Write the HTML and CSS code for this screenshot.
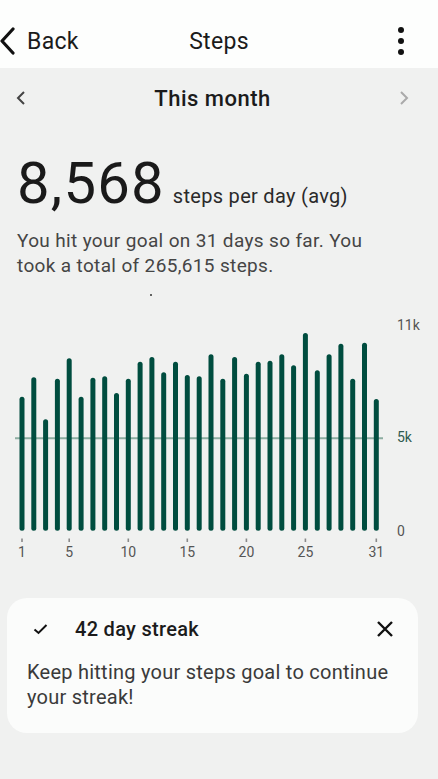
FILE: index.html
```html
<!DOCTYPE html>
<html lang="en">
<head>
    <meta charset="UTF-8">
    <meta name="viewport" content="width=device-width, initial-scale=1.0">
    <title>Steps</title>
    <link rel="stylesheet" href="styles.css">
</head>
<body>
    <div class="topbar">
        <div class="back">
            <svg class="back-icon" width="16" height="28" viewBox="0 0 16 28"><path d="M13 2 L2 14 L13 26" fill="none" stroke="#111" stroke-width="3.2" stroke-linecap="round" stroke-linejoin="round"/></svg>
            <span>Back</span>
        </div>
        <div class="title">Steps</div>
        <div class="kebab">
            <span></span><span></span><span></span>
        </div>
    </div>

    <div class="period">
        <svg width="12" height="16" viewBox="0 0 12 16"><path d="M9 2 L3 8 L9 14" fill="none" stroke="#444" stroke-width="2"/></svg>
        <div class="period-name">This month</div>
        <svg width="12" height="16" viewBox="0 0 12 16"><path d="M3 2 L9 8 L3 14" fill="none" stroke="#aaa" stroke-width="2"/></svg>
    </div>

    <div class="summary">
        <div class="avg"><span class="avg-num">8,568</span><span class="avg-unit">steps per day (avg)</span></div>
        <p class="note">You hit your goal on 31 days so far. You took a total of 265,615 steps.</p>
    </div>

    <svg class="chart" width="438" height="280" viewBox="0 0 438 280">
        <circle cx="151" cy="10" r="1" fill="#333"/>
        <g transform="translate(0,25)">
            <line x1="15" y1="128.3" x2="383" y2="128.3" stroke="#8dada1" stroke-width="2"/>
            <g stroke="#004d3f" stroke-width="5" stroke-linecap="round">
                <line x1="22.0" y1="89.2" x2="22.0" y2="218.2"/>
                <line x1="33.8" y1="69.8" x2="33.8" y2="218.2"/>
                <line x1="45.6" y1="111.8" x2="45.6" y2="218.2"/>
                <line x1="57.4" y1="71.2" x2="57.4" y2="218.2"/>
                <line x1="69.2" y1="50.8" x2="69.2" y2="218.2"/>
                <line x1="81.1" y1="89.2" x2="81.1" y2="218.2"/>
                <line x1="92.9" y1="70.2" x2="92.9" y2="218.2"/>
                <line x1="104.7" y1="68.8" x2="104.7" y2="218.2"/>
                <line x1="116.5" y1="85.5" x2="116.5" y2="218.2"/>
                <line x1="128.3" y1="71.2" x2="128.3" y2="218.2"/>
                <line x1="140.1" y1="54.2" x2="140.1" y2="218.2"/>
                <line x1="151.9" y1="49.5" x2="151.9" y2="218.2"/>
                <line x1="163.7" y1="64.8" x2="163.7" y2="218.2"/>
                <line x1="175.5" y1="54.2" x2="175.5" y2="218.2"/>
                <line x1="187.3" y1="67.5" x2="187.3" y2="218.2"/>
                <line x1="199.2" y1="68.8" x2="199.2" y2="218.2"/>
                <line x1="211.0" y1="46.8" x2="211.0" y2="218.2"/>
                <line x1="222.8" y1="71.2" x2="222.8" y2="218.2"/>
                <line x1="234.6" y1="49.5" x2="234.6" y2="218.2"/>
                <line x1="246.4" y1="66.2" x2="246.4" y2="218.2"/>
                <line x1="258.2" y1="54.2" x2="258.2" y2="218.2"/>
                <line x1="270.0" y1="53.2" x2="270.0" y2="218.2"/>
                <line x1="281.8" y1="46.8" x2="281.8" y2="218.2"/>
                <line x1="293.6" y1="57.8" x2="293.6" y2="218.2"/>
                <line x1="305.4" y1="25.5" x2="305.4" y2="218.2"/>
                <line x1="317.3" y1="62.8" x2="317.3" y2="218.2"/>
                <line x1="329.1" y1="46.8" x2="329.1" y2="218.2"/>
                <line x1="340.9" y1="36.2" x2="340.9" y2="218.2"/>
                <line x1="352.7" y1="71.2" x2="352.7" y2="218.2"/>
                <line x1="364.5" y1="35.2" x2="364.5" y2="218.2"/>
                <line x1="376.3" y1="91.5" x2="376.3" y2="218.2"/>
            </g>
            <g stroke="#8a8a8a" stroke-width="1.6">
                <line x1="22.0" y1="228.5" x2="22.0" y2="232"/>
                <line x1="69.2" y1="228.5" x2="69.2" y2="232"/>
                <line x1="128.3" y1="228.5" x2="128.3" y2="232"/>
                <line x1="187.3" y1="228.5" x2="187.3" y2="232"/>
                <line x1="246.4" y1="228.5" x2="246.4" y2="232"/>
                <line x1="305.4" y1="228.5" x2="305.4" y2="232"/>
                <line x1="376.3" y1="228.5" x2="376.3" y2="232"/>
            </g>
            <g class="day-labels" text-anchor="middle">
                <text x="22.0" y="246.5">1</text>
                <text x="69.2" y="246.5">5</text>
                <text x="128.3" y="246.5">10</text>
                <text x="187.3" y="246.5">15</text>
                <text x="246.4" y="246.5">20</text>
                <text x="305.4" y="246.5">25</text>
                <text x="376.3" y="246.5">31</text>
            </g>
            <text class="axis" x="397" y="20">11k</text>
            <text class="axis goal" x="397" y="132">5k</text>
            <text class="axis" x="397" y="226">0</text>
        </g>
    </svg>

    <div class="card">
        <div class="card-head">
            <svg class="check" width="15" height="12" viewBox="0 0 15 12"><path d="M1.5 6.5 L5.5 10 L13.5 2" fill="none" stroke="#111" stroke-width="2"/></svg>
            <div class="card-title">42 day streak</div>
            <svg class="close" width="18" height="18" viewBox="0 0 18 18"><path d="M2 2 L16 16 M16 2 L2 16" fill="none" stroke="#111" stroke-width="2.4"/></svg>
        </div>
        <p class="card-text">Keep hitting your steps goal to continue your streak!</p>
    </div>
</body>
</html>
```

FILE: styles.css
```css
body { margin: 0; background: #f0f1f0; font-family: Roboto, "Noto Sans", sans-serif; color: #1b1b1b; }
.topbar { height: 54px; padding-top: 14px; background: #fdfefd; display: flex; align-items: center; position: relative; }
.back { display: flex; align-items: center; gap: 11px; font-size: 23px; letter-spacing: 0.3px; }
.title { position: absolute; left: 0; right: 0; top: 14px; height: 54px; display: flex; align-items: center; justify-content: center; font-size: 23px; letter-spacing: 0.3px; pointer-events: none; }
.kebab { margin-left: auto; margin-right: 34px; display: flex; flex-direction: column; gap: 5px; }
.kebab span { width: 6px; height: 6px; border-radius: 50%; background: #111; }
.period { height: 60px; display: flex; align-items: center; justify-content: space-between; padding: 0 28px 0 15px; }
.period-name { font-size: 22px; font-weight: 500; letter-spacing: 0.5px; color: #1b1b1b; }
.summary { padding: 22px 17px 0; }
.avg { display: flex; align-items: baseline; gap: 8px; }
.avg-num { font-size: 58px; line-height: 66px; letter-spacing: 1.2px; color: #1a1a1a; }
.avg-unit { font-size: 20px; letter-spacing: 0.3px; color: #2a2a2a; }
.note { margin: 12px 0 0; max-width: 362px; font-size: 19px; line-height: 25px; letter-spacing: 0.35px; color: #454545; }
.chart { display: block; margin-top: 7px; }
.day-labels text, .axis { font-family: Roboto, sans-serif; font-size: 14px; fill: #555; }
.axis.goal { fill: #2f5b50; }
.card { margin: 33px 20px 0 7px; background: #fbfcfb; border-radius: 20px; padding: 19px 20px 23px; }
.card-head { display: flex; align-items: center; gap: 27px; padding-left: 6px; line-height: 24px; }
.card-title { font-size: 20px; font-weight: 500; letter-spacing: 0.3px; flex: 1; }
.close { margin-right: 4px; }
.card-text { margin: 19px 0 0; font-size: 20px; line-height: 25px; letter-spacing: 0.25px; color: #3a3a3a; }
```
